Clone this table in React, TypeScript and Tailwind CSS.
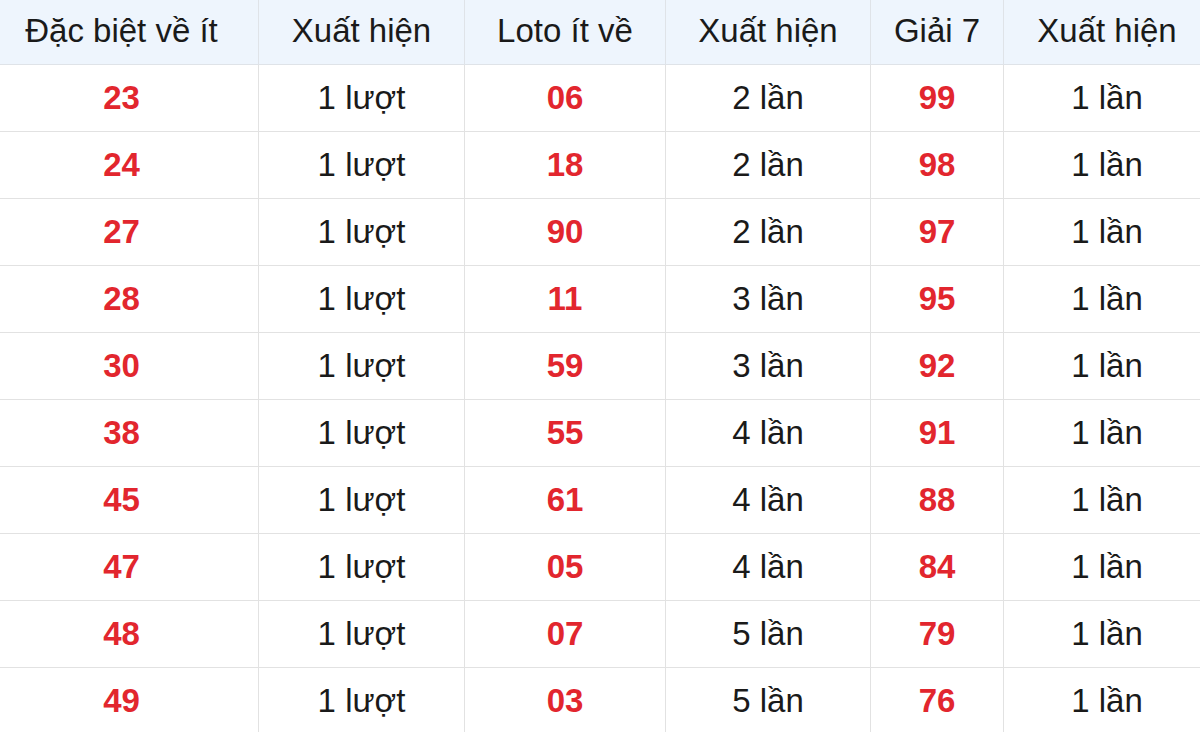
const rows: [string, string, string, string, string, string][] = [
  ["23", "1 lượt", "06", "2 lần", "99", "1 lần"],
  ["24", "1 lượt", "18", "2 lần", "98", "1 lần"],
  ["27", "1 lượt", "90", "2 lần", "97", "1 lần"],
  ["28", "1 lượt", "11", "3 lần", "95", "1 lần"],
  ["30", "1 lượt", "59", "3 lần", "92", "1 lần"],
  ["38", "1 lượt", "55", "4 lần", "91", "1 lần"],
  ["45", "1 lượt", "61", "4 lần", "88", "1 lần"],
  ["47", "1 lượt", "05", "4 lần", "84", "1 lần"],
  ["48", "1 lượt", "07", "5 lần", "79", "1 lần"],
  ["49", "1 lượt", "03", "5 lần", "76", "1 lần"],
]

const headers = ["Đặc biệt về ít", "Xuất hiện", "Loto ít về", "Xuất hiện", "Giải 7", "Xuất hiện"]
const widths = ["w-[274px]", "w-[206px]", "w-[201px]", "w-[205px]", "w-[133px]", "w-[207px]"]

export default function App() {
  return (
    <div className="w-[1200px] h-[732px] overflow-hidden bg-white font-['Liberation_Sans',Arial,sans-serif] text-[33px] text-[#1a1a1a]">
      {/* table is a bit wider than the viewport, both outer columns are cut */}
      <table className="ml-[-16px] w-[1226px] table-fixed border-collapse">
        <colgroup>
          {widths.map((w, i) => (
            <col key={i} className={w} />
          ))}
        </colgroup>
        <thead>
          <tr className="h-[64px] bg-[#eef5fd]">
            {headers.map((h, i) => (
              <th
                key={i}
                className="border border-[#dfe3e8] border-t-0 font-normal text-center align-middle pb-[3px]"
              >
                {h}
              </th>
            ))}
          </tr>
        </thead>
        <tbody>
          {rows.map((r, i) => (
            <tr key={i} className="h-[67px]">
              {r.map((c, j) => (
                <td
                  key={j}
                  className={
                    "border border-[#e2e2e2] text-center align-middle " +
                    (j % 2 === 0 ? "font-bold text-[#e2262e]" : "")
                  }
                >
                  {c}
                </td>
              ))}
            </tr>
          ))}
        </tbody>
      </table>
    </div>
  )
}
